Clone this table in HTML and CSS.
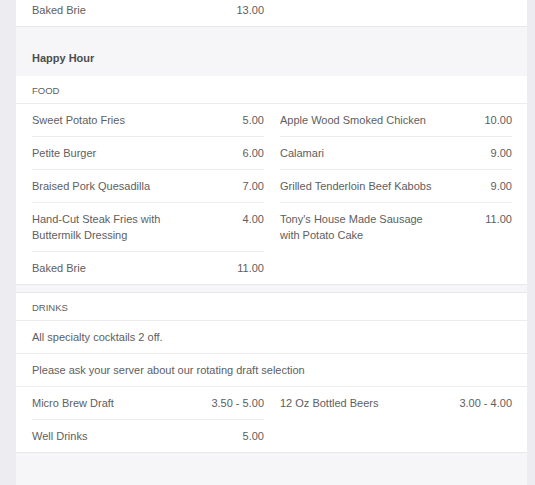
FILE: index.html
```html
<!DOCTYPE html>
<html>
<head>
<meta charset="utf-8">
<link rel="stylesheet" href="styles.css">
</head>
<body>
<div class="card">
  <div class="block top">
    <div class="grid">
      <div class="item last"><span class="name">Baked Brie</span><span class="price">13.00</span></div>
    </div>
  </div>

  <h2 class="heading">Happy Hour</h2>

  <div class="block">
    <div class="sub">FOOD</div>
    <div class="grid">
      <div class="item"><span class="name">Sweet Potato Fries</span><span class="price">5.00</span></div>
      <div class="item"><span class="name">Apple Wood Smoked Chicken</span><span class="price">10.00</span></div>
      <div class="item"><span class="name">Petite Burger</span><span class="price">6.00</span></div>
      <div class="item"><span class="name">Calamari</span><span class="price">9.00</span></div>
      <div class="item"><span class="name">Braised Pork Quesadilla</span><span class="price">7.00</span></div>
      <div class="item"><span class="name">Grilled Tenderloin Beef Kabobs</span><span class="price">9.00</span></div>
      <div class="item"><span class="name">Hand-Cut Steak Fries with Buttermilk Dressing</span><span class="price">4.00</span></div>
      <div class="item last"><span class="name">Tony's House Made Sausage with Potato Cake</span><span class="price">11.00</span></div>
      <div class="item last"><span class="name">Baked Brie</span><span class="price">11.00</span></div>
    </div>
  </div>

  <div class="block drinks">
    <div class="sub">DRINKS</div>
    <div class="note">All specialty cocktails 2 off.</div>
    <div class="note">Please ask your server about our rotating draft selection</div>
    <div class="grid">
      <div class="item"><span class="name">Micro Brew Draft</span><span class="price">3.50 - 5.00</span></div>
      <div class="item last"><span class="name">12 Oz Bottled Beers</span><span class="price">3.00 - 4.00</span></div>
      <div class="item last"><span class="name">Well Drinks</span><span class="price">5.00</span></div>
    </div>
  </div>
</div>
</body>
</html>
```

FILE: styles.css
```css
html, body {
  margin: 0;
  padding: 0;
  background: #ececf1;
  height: 100%;
  overflow: hidden;
}

body {
  font-family: "Liberation Sans", Arial, sans-serif;
  font-size: 11px;
  color: #5e5e5e;
}

.card {
  margin: 0 8px 0 16px;
  background: #f6f6f9;
  min-height: calc(100% + 6px);
}

.block {
  background: #fff;
  border-bottom: 1px solid #e8e8ec;
}

.block.top {
  margin-top: -6px;
}

.block.drinks {
  margin-top: 7px;
  border-top: 1px solid #e8e8ec;
}

.heading {
  margin: 0;
  padding: 23px 16px 10px;
  font-size: 11px;
  line-height: 16px;
  font-weight: bold;
  color: #4d4d4d;
}

.sub {
  padding: 8px 16px 5px;
  line-height: 14px;
  font-size: 9.5px;
  text-transform: uppercase;
  border-bottom: 1px solid #ececef;
}

.note {
  padding: 8px 16px;
  line-height: 16px;
  border-bottom: 1px solid #ececef;
}

.grid {
  display: grid;
  grid-template-columns: 232px 232px;
  column-gap: 16px;
  padding: 0 15px 0 16px;
}

.item {
  display: flex;
  justify-content: space-between;
  align-items: flex-start;
  gap: 12px;
  padding: 8px 0;
  line-height: 16px;
  border-bottom: 1px solid #ececef;
}

.item.last {
  border-bottom: none;
}

.name {
  max-width: 160px;
}

.price {
  white-space: nowrap;
}
```
